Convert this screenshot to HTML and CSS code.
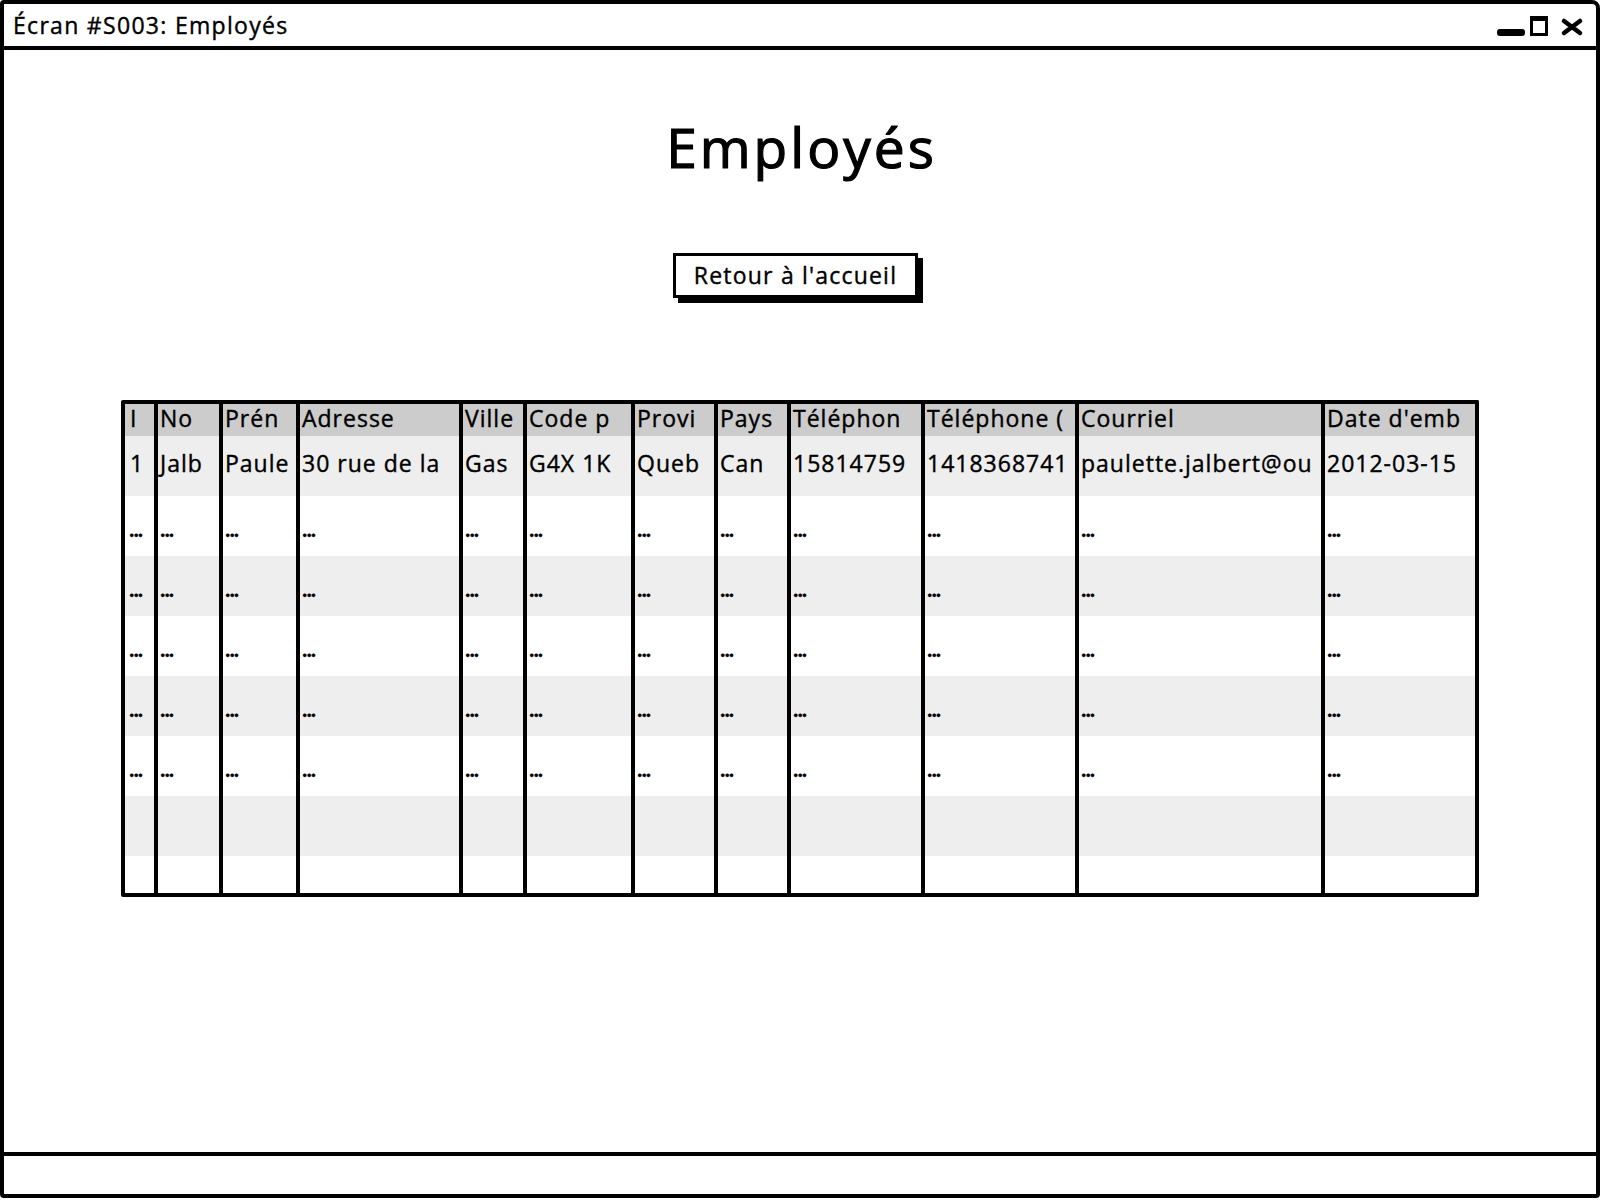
FILE: index.html
```html
<!DOCTYPE html>
<html lang="fr">
<head>
<meta charset="utf-8">
<title>Écran #S003: Employés</title>
<link rel="stylesheet" href="styles.css">
</head>
<body>
<div class="window">
  <div class="titlebar">
    <span class="title">Écran #S003: Employés</span>
    <svg class="controls" width="90" height="26" viewBox="0 0 90 26">
      <rect x="2" y="16" width="28" height="7" rx="3" fill="#000"/>
      <rect x="36.5" y="4.5" width="15" height="17" fill="none" stroke="#000" stroke-width="3"/>
      <rect x="35" y="3" width="18" height="5" fill="#000"/>
      <path d="M69 8 L85 20 M85 8 L69 20" stroke="#000" stroke-width="4.5" stroke-linecap="round"/>
    </svg>
  </div>
  <div class="main">
    <h1 class="heading">Employés</h1>
    <div class="button">Retour à l'accueil</div>
    <div class="table">
      <div class="row head">
        <div>I</div><div>No</div><div>Prén</div><div>Adresse</div><div>Ville</div><div>Code p</div><div>Provi</div><div>Pays</div><div>Téléphon</div><div>Téléphone (</div><div>Courriel</div><div>Date d'emb</div>
      </div>
      <div class="row alt">
        <div>1</div><div>Jalb</div><div>Paule</div><div>30 rue de la</div><div>Gas</div><div>G4X 1K</div><div>Queb</div><div>Can</div><div>15814759</div><div>1418368741</div><div>paulette.jalbert@ou</div><div>2012-03-15</div>
      </div>
      <div class="row dots">
        <div>...</div><div>...</div><div>...</div><div>...</div><div>...</div><div>...</div><div>...</div><div>...</div><div>...</div><div>...</div><div>...</div><div>...</div>
      </div>
      <div class="row alt dots">
        <div>...</div><div>...</div><div>...</div><div>...</div><div>...</div><div>...</div><div>...</div><div>...</div><div>...</div><div>...</div><div>...</div><div>...</div>
      </div>
      <div class="row dots">
        <div>...</div><div>...</div><div>...</div><div>...</div><div>...</div><div>...</div><div>...</div><div>...</div><div>...</div><div>...</div><div>...</div><div>...</div>
      </div>
      <div class="row alt dots">
        <div>...</div><div>...</div><div>...</div><div>...</div><div>...</div><div>...</div><div>...</div><div>...</div><div>...</div><div>...</div><div>...</div><div>...</div>
      </div>
      <div class="row dots">
        <div>...</div><div>...</div><div>...</div><div>...</div><div>...</div><div>...</div><div>...</div><div>...</div><div>...</div><div>...</div><div>...</div><div>...</div>
      </div>
      <div class="row alt">
        <div></div><div></div><div></div><div></div><div></div><div></div><div></div><div></div><div></div><div></div><div></div><div></div>
      </div>
      <div class="row">
        <div></div><div></div><div></div><div></div><div></div><div></div><div></div><div></div><div></div><div></div><div></div><div></div>
      </div>
    </div>
  </div>
  <div class="statusbar"></div>
</div>
</body>
</html>
```

FILE: styles.css
```css
html, body {
  margin: 0;
  padding: 0;
  background: #fff;
}

body {
  font-family: "Open Sans", "Noto Sans", sans-serif;
  color: #000;
  -webkit-text-stroke: 0.4px #000;
}

.window {
  box-sizing: border-box;
  width: 1600px;
  height: 1198px;
  border: 4px solid #000;
  border-radius: 4px 8px 4px 4px;
  display: flex;
  flex-direction: column;
}

.titlebar {
  box-sizing: border-box;
  height: 46px;
  border-bottom: 4px solid #000;
  display: flex;
  align-items: center;
  justify-content: space-between;
  padding: 0 11px 0 9px;
}

.title {
  font-size: 23px;
  line-height: 32px;
  letter-spacing: 1.3px;
}

.controls {
  display: block;
  margin-top: 2px;
}

.main {
  flex: 1;
  display: flex;
  flex-direction: column;
  align-items: center;
}

.heading {
  margin: 66px 0 0;
  padding-left: 3px;
  font-size: 55px;
  font-weight: 400;
  line-height: 62px;
  letter-spacing: 3px;
  -webkit-text-stroke: 1.2px #000;
}

.button {
  box-sizing: border-box;
  margin: 75px 9px 0 0;
  width: 245px;
  height: 45px;
  border: 3px solid #000;
  box-shadow: 5px 5px 0 #000;
  font-size: 23px;
  line-height: 38px;
  letter-spacing: 1.2px;
  text-align: center;
  background: #fff;
}

.table {
  margin-top: 102px;
  display: grid;
  grid-template-columns: 33px 65px 77px 163px 64px 108px 83px 73px 134px 154px 246px 154px;
  grid-template-rows: 32px repeat(7, 60px) 37px;
  border-top: 4px solid #000;
  border-right: 4px solid #000;
  border-bottom: 4px solid #000;
  border-radius: 2px;
}

.row {
  display: contents;
}

.row > div {
  box-sizing: border-box;
  border-left: 4px solid #000;
  padding-left: 2px;
  white-space: nowrap;
  font-size: 23px;
  line-height: 54px;
  letter-spacing: 1px;
}

.row > div:first-child {
  padding-left: 5px;
}

.row.head > div {
  background: #cccccc;
  line-height: 28px;
}

.row.alt > div {
  background: #eeeeee;
}

.row.dots > div {
  letter-spacing: -1px;
  font-weight: 700;
  font-size: 19px;
  line-height: 68px;
}

.row.dots > div:first-child {
  padding-left: 4px;
}

.statusbar {
  box-sizing: border-box;
  height: 42px;
  border-top: 4px solid #000;
}
```
